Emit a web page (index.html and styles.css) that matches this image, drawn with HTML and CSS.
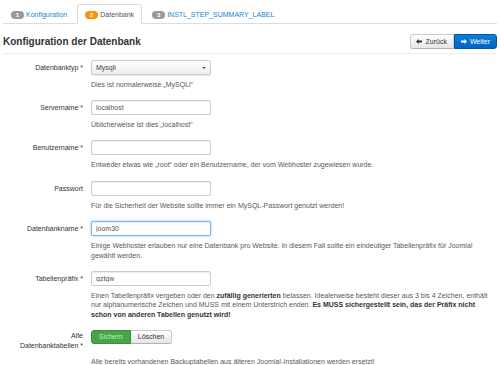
FILE: index.html
```html
<!DOCTYPE html>
<html lang="de">
<head>
  <meta charset="UTF-8">
  <meta name="viewport" content="width=device-width, initial-scale=1.0">
  <title>Joomla! Installation</title>
  <link rel="stylesheet" href="styles.css">
</head>
<body>
  <div class="wrap">
    <ul class="nav-tabs">
      <li><a href="#"><span class="badge">1</span>Konfiguration</a></li>
      <li class="active"><a href="#"><span class="badge badge-warning">2</span>Datenbank</a></li>
      <li><a href="#"><span class="badge">3</span>INSTL_STEP_SUMMARY_LABEL</a></li>
    </ul>

    <div class="page-header">
      <h1>Konfiguration der Datenbank</h1>
      <div class="btn-group">
        <button type="button" class="btn">
          <svg width="6" height="5" viewBox="0 0 6 5"><path d="M0 2.5 L2.6 0 V1.6 H6 V3.4 H2.6 V5 Z" fill="#333"/></svg>
          Zurück
        </button>
        <button type="button" class="btn btn-primary">
          <svg width="6" height="5" viewBox="0 0 6 5"><path d="M6 2.5 L3.4 0 V1.6 H0 V3.4 H3.4 V5 Z" fill="#fff"/></svg>
          Weiter
        </button>
      </div>
    </div>

    <form class="form-horizontal">
      <div class="control-group">
        <label class="control-label">Datenbanktyp *</label>
        <div class="controls">
          <div class="select">Mysqli<span class="caret"></span></div>
          <p class="help">Dies ist normalerweise „MySQLi“</p>
        </div>
      </div>

      <div class="control-group">
        <label class="control-label" for="host">Servername *</label>
        <div class="controls">
          <input type="text" id="host" value="localhost">
          <p class="help">Üblicherweise ist dies „localhost“</p>
        </div>
      </div>

      <div class="control-group">
        <label class="control-label" for="user">Benutzername *</label>
        <div class="controls">
          <input type="text" id="user" value="">
          <p class="help">Entweder etwas wie „root“ oder ein Benutzername, der vom Webhoster zugewiesen wurde.</p>
        </div>
      </div>

      <div class="control-group">
        <label class="control-label" for="pass">Passwort</label>
        <div class="controls">
          <input type="password" id="pass" value="">
          <p class="help">Für die Sicherheit der Website sollte immer ein MySQL-Passwort genutzt werden!</p>
        </div>
      </div>

      <div class="control-group">
        <label class="control-label" for="dbname">Datenbankname *</label>
        <div class="controls">
          <input type="text" id="dbname" class="focused" value="joom30">
          <p class="help">Einige Webhoster erlauben nur eine Datenbank pro Website. In diesem Fall sollte ein eindeutiger Tabellenpräfix für Joomla! gewählt werden.</p>
        </div>
      </div>

      <div class="control-group">
        <label class="control-label" for="prefix">Tabellenpräfix *</label>
        <div class="controls">
          <input type="text" id="prefix" value="gztqw_">
          <p class="help">Einen Tabellenpräfix vergeben oder den <b>zufällig generierten</b> belassen. Idealerweise besteht dieser aus 3 bis 4 Zeichen, enthält nur alphanumerische Zeichen und MUSS mit einem Unterstrich enden. <b>Es MUSS sichergestellt sein, das der Präfix nicht schon von anderen Tabellen genutzt wird!</b></p>
        </div>
      </div>

      <div class="control-group">
        <label class="control-label label-tall">Alte<br>Datenbanktabellen *</label>
        <div class="controls">
          <div class="radio-group">
            <span class="btn btn-success">Sichern</span><span class="btn">Löschen</span>
          </div>
          <p class="help">Alle bereits vorhandenen Backuptabellen aus älteren Joomla!-Installationen werden ersetzt!</p>
        </div>
      </div>
    </form>
  </div>
</body>
</html>
```

FILE: styles.css
```css
body {
  margin: 0;
  background-color: #fff;
  color: #333;
  font-family: "Liberation Sans", Arial, sans-serif;
  font-size: 7px;
  line-height: 9.7px;
}
.wrap {
  padding: 4px 3px 0;
}
.nav-tabs {
  display: flex;
  list-style: none;
  margin: 0;
  padding: 0;
  border-bottom: 1px solid #ddd;
}
.nav-tabs li {
  margin-right: 2px;
  margin-bottom: -1px;
}
.nav-tabs a {
  display: flex;
  align-items: center;
  gap: 2px;
  box-sizing: border-box;
  height: 20px;
  padding: 1px 7px 0;
  border: 1px solid transparent;
  border-radius: 3px 3px 0 0;
  color: #1a85d0;
  text-decoration: none;
}
.nav-tabs .active a {
  border-color: #ddd;
  border-bottom-color: #fff;
  background-color: #fff;
  color: #555;
}
.badge {
  display: inline-block;
  min-width: 5px;
  height: 8px;
  padding: 0 4px;
  border-radius: 4px;
  background-color: #999;
  color: #fff;
  font-size: 6px;
  font-weight: bold;
  line-height: 8px;
  text-align: center;
}
.badge-warning {
  background-color: #f89406;
}
.page-header {
  display: flex;
  justify-content: space-between;
  align-items: center;
  margin-top: 10px;
  padding-bottom: 4px;
  border-bottom: 1px solid #eee;
}
h1 {
  margin: 0;
  font-size: 10px;
  line-height: 12px;
  color: #333;
}
.btn-group {
  display: flex;
}
.btn {
  display: inline-flex;
  align-items: center;
  gap: 3px;
  box-sizing: border-box;
  height: 15px;
  padding: 0 6px;
  border: 1px solid #ccc;
  border-bottom-color: #b3b3b3;
  background: linear-gradient(#fff, #e6e6e6);
  color: #333;
  font-family: inherit;
  font-size: 7px;
  cursor: pointer;
}
.btn-group .btn:first-child {
  padding-left: 5px;
  border-radius: 3px 0 0 3px;
}
.btn-group .btn:last-child {
  border-radius: 0 3px 3px 0;
}
.btn-primary {
  border-color: #0055aa;
  background: linear-gradient(#0a7fd9, #0563c1);
  color: #fff;
}
.form-horizontal {
  margin-top: 6px;
}
.control-group {
  display: grid;
  grid-template-columns: 80px 1fr;
  column-gap: 8px;
  margin-bottom: 10.5px;
}
.control-label {
  padding-top: 3px;
  text-align: right;
}
.label-tall {
  padding-top: 1px;
}
.controls input,
.select {
  display: block;
  box-sizing: border-box;
  width: 120px;
  height: 15px;
  padding: 0 4px;
  border: 1px solid #ccc;
  border-radius: 2px;
  box-shadow: inset 0 1px 1px rgba(0, 0, 0, 0.075);
  color: #555;
  font-family: inherit;
  font-size: 7px;
}
.controls input.focused {
  border-color: rgba(82, 168, 236, 0.8);
  box-shadow: inset 0 1px 1px rgba(0, 0, 0, 0.075), 0 0 3px rgba(82, 168, 236, 0.6);
  outline: none;
}
.select {
  position: relative;
  line-height: 13px;
  background: linear-gradient(#fff, #eee);
  box-shadow: 0 1px 1px rgba(0, 0, 0, 0.1);
  color: #444;
}
.caret {
  position: absolute;
  top: 6px;
  right: 4px;
  border-top: 2px solid #555;
  border-left: 2px solid transparent;
  border-right: 2px solid transparent;
}
.help {
  margin: 5px 0 0;
  color: #595959;
}
.help b {
  color: #333;
}
.radio-group {
  display: flex;
  margin-bottom: 13px;
}
.radio-group .btn {
  height: 14px;
  padding: 0 7px;
  cursor: default;
}
.radio-group .btn:first-child {
  border-radius: 3px 0 0 3px;
}
.radio-group .btn:last-child {
  border-left: 0;
  border-radius: 0 3px 3px 0;
}
.btn-success {
  border-color: #3a8d3a;
  background: #46a546;
  color: #c6e8c6;
}
```
